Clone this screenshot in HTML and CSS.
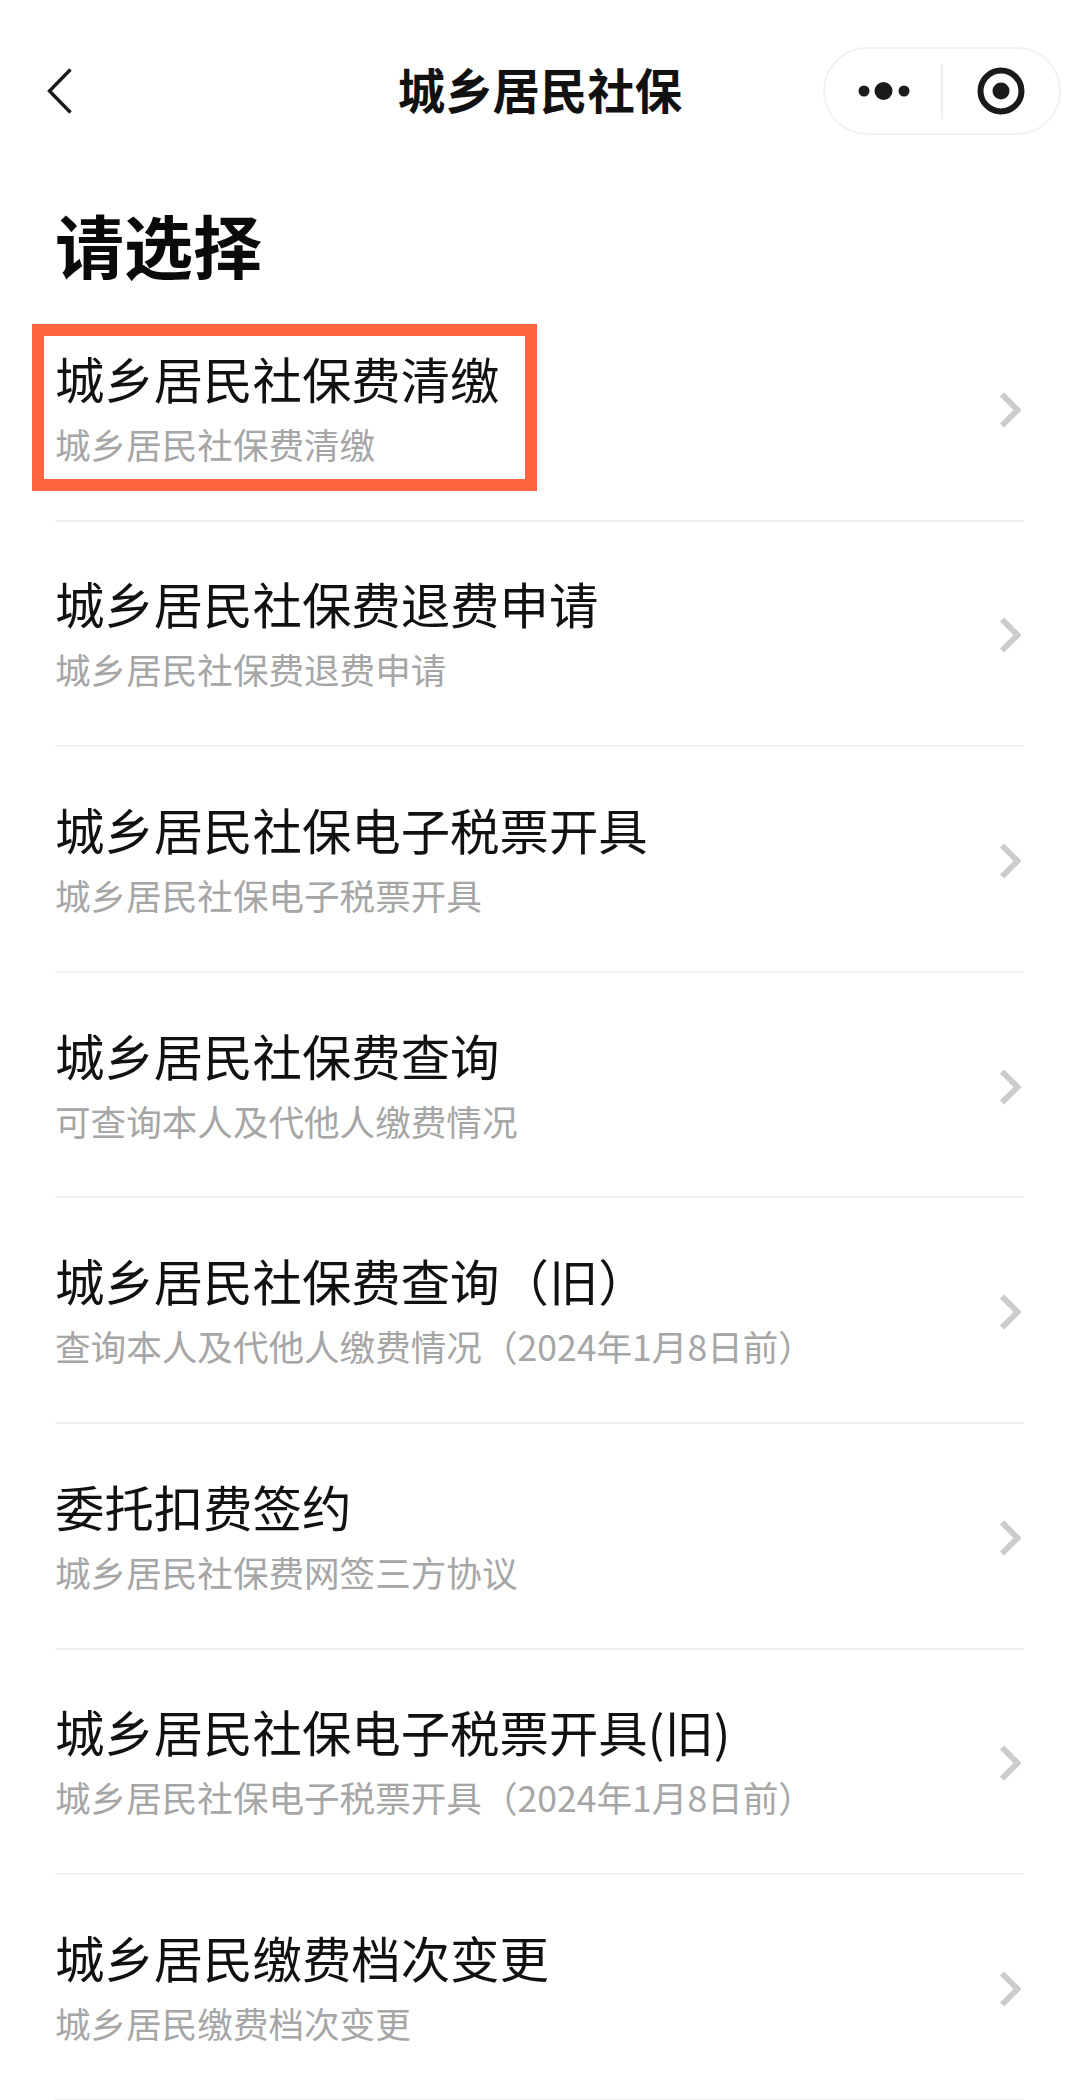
FILE: index.html
```html
<!DOCTYPE html>
<html lang="zh-CN">
<head>
    <meta charset="UTF-8">
    <meta name="viewport" content="width=device-width, initial-scale=1.0">
    <title>城乡居民社保</title>
    <link rel="stylesheet" href="styles.css">
</head>
<body>
    <header class="nav">
        <svg class="nav-back" width="25" height="46" viewBox="0 0 25 46"><path d="M23.5 1.5 L2.5 23 L23.5 44.5" fill="none" stroke="#1a1a1a" stroke-width="3.4"/></svg>
        <div class="nav-title">城乡居民社保</div>
        <div class="capsule">
            <svg class="capsule-more" width="60" height="20" viewBox="0 0 60 20"><circle cx="10" cy="10" r="5.5"/><circle cx="29.5" cy="10" r="9"/><circle cx="50" cy="10" r="5.5"/></svg>
            <span class="capsule-line"></span>
            <svg class="capsule-close" width="48" height="48" viewBox="0 0 48 48"><circle cx="24" cy="24" r="20.5" fill="none" stroke="#1a1a1a" stroke-width="6"/><circle cx="24" cy="24" r="8.5"/></svg>
        </div>
    </header>

    <h1 class="heading">请选择</h1>

    <ul class="menu">
        <li class="menu-item">
            <div class="menu-text">
                <div class="menu-title">城乡居民社保费清缴</div>
                <div class="menu-desc">城乡居民社保费清缴</div>
            </div>
            <svg class="menu-arrow" width="22" height="36" viewBox="0 0 22 36"><path d="M3 2.5 L18.5 18 L3 33.5"/></svg>
            <div class="highlight"></div>
        </li>
        <li class="menu-item">
            <div class="menu-text">
                <div class="menu-title">城乡居民社保费退费申请</div>
                <div class="menu-desc">城乡居民社保费退费申请</div>
            </div>
            <svg class="menu-arrow" width="22" height="36" viewBox="0 0 22 36"><path d="M3 2.5 L18.5 18 L3 33.5"/></svg>
        </li>
        <li class="menu-item">
            <div class="menu-text">
                <div class="menu-title">城乡居民社保电子税票开具</div>
                <div class="menu-desc">城乡居民社保电子税票开具</div>
            </div>
            <svg class="menu-arrow" width="22" height="36" viewBox="0 0 22 36"><path d="M3 2.5 L18.5 18 L3 33.5"/></svg>
        </li>
        <li class="menu-item">
            <div class="menu-text">
                <div class="menu-title">城乡居民社保费查询</div>
                <div class="menu-desc">可查询本人及代他人缴费情况</div>
            </div>
            <svg class="menu-arrow" width="22" height="36" viewBox="0 0 22 36"><path d="M3 2.5 L18.5 18 L3 33.5"/></svg>
        </li>
        <li class="menu-item">
            <div class="menu-text">
                <div class="menu-title">城乡居民社保费查询（旧）</div>
                <div class="menu-desc">查询本人及代他人缴费情况（2024年1月8日前）</div>
            </div>
            <svg class="menu-arrow" width="22" height="36" viewBox="0 0 22 36"><path d="M3 2.5 L18.5 18 L3 33.5"/></svg>
        </li>
        <li class="menu-item">
            <div class="menu-text">
                <div class="menu-title">委托扣费签约</div>
                <div class="menu-desc">城乡居民社保费网签三方协议</div>
            </div>
            <svg class="menu-arrow" width="22" height="36" viewBox="0 0 22 36"><path d="M3 2.5 L18.5 18 L3 33.5"/></svg>
        </li>
        <li class="menu-item">
            <div class="menu-text">
                <div class="menu-title">城乡居民社保电子税票开具(旧)</div>
                <div class="menu-desc">城乡居民社保电子税票开具（2024年1月8日前）</div>
            </div>
            <svg class="menu-arrow" width="22" height="36" viewBox="0 0 22 36"><path d="M3 2.5 L18.5 18 L3 33.5"/></svg>
        </li>
        <li class="menu-item">
            <div class="menu-text">
                <div class="menu-title">城乡居民缴费档次变更</div>
                <div class="menu-desc">城乡居民缴费档次变更</div>
            </div>
            <svg class="menu-arrow" width="22" height="36" viewBox="0 0 22 36"><path d="M3 2.5 L18.5 18 L3 33.5"/></svg>
        </li>
    </ul>
</body>
</html>
```

FILE: styles.css
```css
* {
    box-sizing: border-box;
    margin: 0;
    padding: 0;
}
body {
    font-family: "Noto Sans CJK SC", "Noto Sans", sans-serif;
    background-color: #ffffff;
    color: #111111;
    overflow: hidden;
}
.nav {
    display: grid;
    grid-template-columns: 1fr auto 1fr;
    align-items: center;
    height: 88px;
    margin-top: 47px;
    padding: 0 19px;
}
.nav-back {
    margin-left: 28px;
}
.nav-title {
    font-size: 47.4px;
    font-weight: 700;
    line-height: 88px;
    margin-top: -5px;
}
.capsule {
    justify-self: end;
    display: flex;
    align-items: center;
    width: 238px;
    height: 88px;
    border: 2px solid #f2f2f2;
    border-radius: 44px;
    padding-left: 29px;
}
.capsule-more {
    fill: #1a1a1a;
}
.capsule-line {
    width: 2px;
    height: 55px;
    margin-left: 27px;
    background-color: #ededed;
}
.capsule-close {
    fill: #1a1a1a;
    margin-left: 34px;
}
.heading {
    font-size: 69px;
    font-weight: 700;
    line-height: 90px;
    margin: 64px 0 0 55px;
    color: #0a0a0a;
}
.menu {
    list-style: none;
    margin: 7px 56px 0 55px;
}
.menu-item {
    position: relative;
    display: flex;
    align-items: center;
    justify-content: space-between;
    height: 225.6px;
    border-bottom: 2px solid #f1f1f1;
    padding-bottom: 3px;
}
.menu-title {
    font-size: 49.4px;
    line-height: 64px;
    color: #111111;
}
.menu-desc {
    font-size: 35.6px;
    line-height: 46px;
    margin-top: 11px;
    color: #a6a6a6;
}
.menu-arrow {
    flex: none;
    margin: 7px 3px 0 0;
}
.menu-arrow path {
    fill: none;
    stroke: #cccccc;
    stroke-width: 6;
}
.highlight {
    position: absolute;
    left: -23px;
    top: 28px;
    width: 505px;
    height: 167px;
    border: 12px solid #ff653d;
}
```
